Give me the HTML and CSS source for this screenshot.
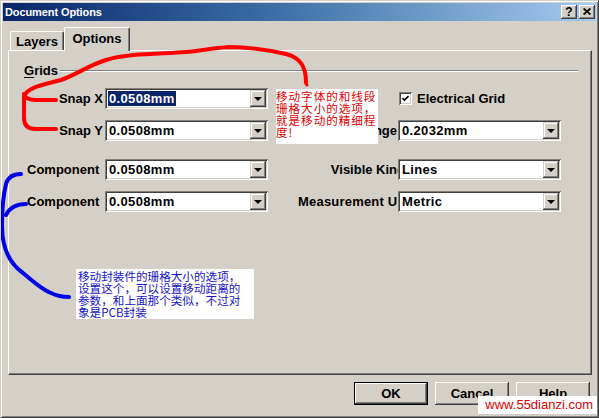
FILE: index.html
```html
<!DOCTYPE html>
<html>
<head>
<meta charset="utf-8">
<title>Document Options</title>
<link rel="stylesheet" href="styles.css">
</head>
<body>
<div class="window">
  <div class="titlebar">
    <span class="title">Document Options</span>
    <div class="caption-btns">
      <span class="cap-btn cap-help">?</span>
      <span class="cap-btn"><svg width="8" height="7" viewBox="0 0 8 7"><path d="M0.6 0.5 L7.4 6.5 M7.4 0.5 L0.6 6.5" stroke="#000" stroke-width="1.7" fill="none"/></svg></span>
    </div>
  </div>
  <div class="client">
    <div class="tabs">
      <div class="tab">Layers</div>
      <div class="tab tab-active">Options</div>
    </div>
    <div class="panel">
      <div class="group-head"><span class="group-title"><u>G</u>rids</span><span class="etch"></span></div>

      <div class="row row-first">
        <div class="label">Snap X</div>
        <div class="combo"><span class="value"><span class="selected">0.0508mm</span></span><span class="drop"></span></div>
        <div class="right check-wrap">
          <span class="checkbox"><svg width="7" height="7" viewBox="0 0 7 7"><path d="M0.5 3 L2.5 5 L6.5 1" stroke="#000" stroke-width="1.6" fill="none"/></svg></span>
          <span class="check-label">Electrical Grid</span>
        </div>
      </div>

      <div class="row">
        <div class="label">Snap Y</div>
        <div class="combo"><span class="value">0.0508mm</span><span class="drop"></span></div>
        <div class="right">
          <div class="label label-right label-range">Range</div>
          <div class="combo"><span class="value">0.2032mm</span><span class="drop"></span></div>
        </div>
      </div>

      <div class="row row-gap">
        <div class="label">Component X</div>
        <div class="combo"><span class="value">0.0508mm</span><span class="drop"></span></div>
        <div class="right">
          <div class="label label-right">Visible Kind</div>
          <div class="combo"><span class="value">Lines</span><span class="drop"></span></div>
        </div>
      </div>

      <div class="row">
        <div class="label">Component Y</div>
        <div class="combo"><span class="value">0.0508mm</span><span class="drop"></span></div>
        <div class="right">
          <div class="label label-right label-wide">Measurement Unit</div>
          <div class="combo"><span class="value">Metric</span><span class="drop"></span></div>
        </div>
      </div>
    </div>
    <div class="buttons">
      <div class="btn btn-default"><span>OK</span></div>
      <div class="btn"><span>Cancel</span></div>
      <div class="btn"><span>Help</span></div>
    </div>
  </div>

  <div class="note note-red">移动字体的和线段<br>珊格大小的选项，<br>就是移动的精细程<br>度!</div>
  <div class="note note-blue">移动封装件的珊格大小的选项，<br>设置这个，可以设置移动距离的<br>参数，和上面那个类似，不过对<br>象是PCB封装</div>

  <svg class="scribble" width="599" height="418" viewBox="0 0 599 418">
    <path class="red-ink" d="M305,82 C305,66 300,57 285,53 C268,49 250,46 228,46 C210,47 200,50 185,51 C160,53 128,52 105,59 C88,64 75,74 60,79 C42,84 27,86 23,95 L23,117 C23,124 27,128 35,128 L55,128 M23,93 C24,97 28,99 35,99 L55,99"/>
    <circle cx="306" cy="84" r="1.6" fill="#ff0000"/>
    <path class="blue-ink" d="M20,173 C12,173 7,176 5,183 C2,195 1,210 1,225 C1,245 8,262 22,272 C32,280 40,288 50,292 C56,295 62,296 68,296 M25,203 C15,203 9,206 5,214"/>
  </svg>

  <div class="watermark">www.55dianzi.com</div>
</div>
</body>
</html>
```

FILE: styles.css
```css
html, body {
  margin: 0;
  padding: 0;
  background: #d4d0c8;
}

body {
  font-family: "Liberation Sans", Arial, sans-serif;
  font-size: 13px;
  font-weight: bold;
  color: #000;
}

.window {
  position: relative;
  width: 599px;
  height: 418px;
  box-sizing: border-box;
  border: 1px solid;
  border-color: #d4d0c8 #404040 #404040 #d4d0c8;
  box-shadow: inset 1px 1px #fff, inset -1px -1px #808080;
  padding: 2px;
  background: #d4d0c8;
  display: flex;
  flex-direction: column;
  overflow: hidden;
}

/* ---------- title bar ---------- */
.titlebar {
  height: 18px;
  display: flex;
  align-items: center;
  justify-content: space-between;
  background: linear-gradient(to right, #0a246a 0%, #3a6ea5 45%, #a6caf0 100%);
  padding: 0 1px 0 2px;
  flex: none;
}

.title {
  color: #fff;
  font-size: 11px;
  font-weight: bold;
  letter-spacing: -0.1px;
}

.caption-btns {
  display: flex;
  gap: 2px;
}

.cap-btn {
  width: 16px;
  height: 14px;
  box-sizing: border-box;
  background: #d4d0c8;
  box-shadow: inset -1px -1px #404040, inset 1px 1px #fff, inset -2px -2px #808080, inset 2px 2px #d4d0c8;
  display: flex;
  align-items: center;
  justify-content: center;
  font-size: 11px;
  line-height: 14px;
  padding-bottom: 1px;
}

.cap-help {
  font-weight: bold;
  font-size: 12px;
}

/* ---------- client area ---------- */
.client {
  flex: 1;
  display: flex;
  flex-direction: column;
  padding: 6px 4px 0 5px;
}

.tabs {
  display: flex;
  align-items: flex-end;
  padding-left: 2px;
  height: 23px;
  flex: none;
}

.tab {
  height: 19px;
  padding: 0 6px;
  box-sizing: border-box;
  border: 1px solid;
  border-color: #fff #404040 transparent #fff;
  border-bottom: none;
  border-radius: 2px 2px 0 0;
  box-shadow: inset -1px 0 #808080;
  display: flex;
  align-items: center;
  width: 54px;
  justify-content: center;
  padding-top: 1px;
}

.tab-active {
  position: relative;
  z-index: 1;
  width: 66px;
  height: 24px;
  margin-bottom: -1px;
  background: #d4d0c8;
  padding-bottom: 4px;
}

.panel {
  height: 325px;
  box-sizing: border-box;
  border: 1px solid;
  border-color: #fff #404040 #404040 #fff;
  box-shadow: inset -1px -1px #808080;
  padding-top: 12px;
  flex: none;
}

.group-head {
  display: flex;
  align-items: center;
  height: 14px;
  padding: 0 13px 0 15px;
  font-weight: bold;
}

.group-title u {
  text-decoration-thickness: 1px;
  text-underline-offset: 2px;
}

.etch {
  flex: 1;
  height: 0;
  margin-left: 2px;
  border-top: 1px solid #808080;
  border-bottom: 1px solid #fff;
  margin-top: 2px;
}

/* ---------- rows ---------- */
.row {
  display: flex;
  align-items: center;
  height: 21px;
  padding-left: 18px;
  margin-top: 11px;
}

.row-gap {
  margin-top: 18px;
}

.label {
  width: 76px;
  margin-right: 2px;
  text-align: right;
  white-space: nowrap;
  overflow: hidden;
  line-height: 21px;
  flex: none;
}

.label-right {
  width: 107px;
  margin-right: -7px;
}

.label-wide {
  letter-spacing: 0.2px;
}

.label-range {
  width: 99px;
  margin-right: 1px;
}

.combo {
  width: 163px;
  height: 21px;
  box-sizing: border-box;
  padding: 2px;
  background: #fff;
  box-shadow: inset 1px 1px #808080, inset -1px -1px #fff, inset 2px 2px #404040, inset -2px -2px #d4d0c8;
  display: flex;
  align-items: center;
  flex: none;
}

.value {
  flex: 1;
  padding-left: 2px;
  line-height: 17px;
  letter-spacing: 0.35px;
  white-space: nowrap;
}

.selected {
  background: #0a246a;
  color: #fff;
  display: inline-block;
  line-height: 15px;
  margin-left: -1px;
  padding: 0 1px;
}

.drop {
  width: 16px;
  height: 17px;
  box-sizing: border-box;
  background: #d4d0c8;
  box-shadow: inset -1px -1px #404040, inset 1px 1px #d4d0c8, inset -2px -2px #808080, inset 2px 2px #fff;
  display: flex;
  align-items: center;
  justify-content: center;
  flex: none;
}

.drop::after {
  content: "";
  border-left: 4px solid transparent;
  border-right: 4px solid transparent;
  border-top: 4px solid #000;
  margin-top: 1px;
}

.right {
  display: flex;
  align-items: center;
  margin-left: 30px;
}

.check-wrap {
  padding-left: 101px;
}

.checkbox {
  width: 13px;
  height: 13px;
  box-sizing: border-box;
  background: #fff;
  box-shadow: inset 1px 1px #808080, inset -1px -1px #fff, inset 2px 2px #404040, inset -2px -2px #d4d0c8;
  display: flex;
  align-items: center;
  justify-content: center;
  margin-right: 5px;
}

.check-label {
  line-height: 21px;
}

/* ---------- buttons ---------- */
.buttons {
  display: flex;
  justify-content: flex-end;
  gap: 7px;
  margin-top: 7px;
  padding-right: 2px;
}

.btn {
  width: 74px;
  height: 23px;
  box-sizing: border-box;
  background: #d4d0c8;
  box-shadow: inset -1px -1px #404040, inset 1px 1px #fff, inset -2px -2px #808080, inset 2px 2px #d4d0c8;
  display: flex;
  align-items: center;
  justify-content: center;
}

.btn-default {
  border: 1px solid #000;
}

/* ---------- overlays ---------- */
.note {
  position: absolute;
  background: #fff;
  font-family: "Noto Sans CJK SC", "Liberation Serif", serif;
  font-weight: normal;
  font-size: 12px;
  line-height: 12px;
  white-space: nowrap;
}

.note-red {
  left: 275px;
  top: 88px;
  width: 102px;
  height: 55px;
  color: #e00000;
  font-size: 11.6px;
  letter-spacing: 0.95px;
  padding-top: 1px;
  box-sizing: border-box;
}

.note-blue {
  left: 75px;
  top: 268px;
  width: 178px;
  height: 50px;
  color: #1414c8;
  padding: 1px 0 0 2px;
  box-sizing: border-box;
  font-size: 11.6px;
  line-height: 12px;
  letter-spacing: 0;
}

.scribble {
  position: absolute;
  left: 0;
  top: 0;
  pointer-events: none;
}

.red-ink {
  fill: none;
  stroke: #ff0000;
  stroke-width: 4;
  stroke-linecap: round;
  stroke-linejoin: round;
}

.blue-ink {
  fill: none;
  stroke: #0000e8;
  stroke-width: 4;
  stroke-linecap: round;
  stroke-linejoin: round;
}

.watermark {
  position: absolute;
  left: 477px;
  top: 395px;
  width: 119px;
  height: 18px;
  box-sizing: border-box;
  background: #fff;
  color: #e00000;
  font-family: "Liberation Sans", Arial, sans-serif;
  font-weight: normal;
  font-size: 13px;
  line-height: 18px;
  text-align: right;
  padding-right: 4px;
}
```
